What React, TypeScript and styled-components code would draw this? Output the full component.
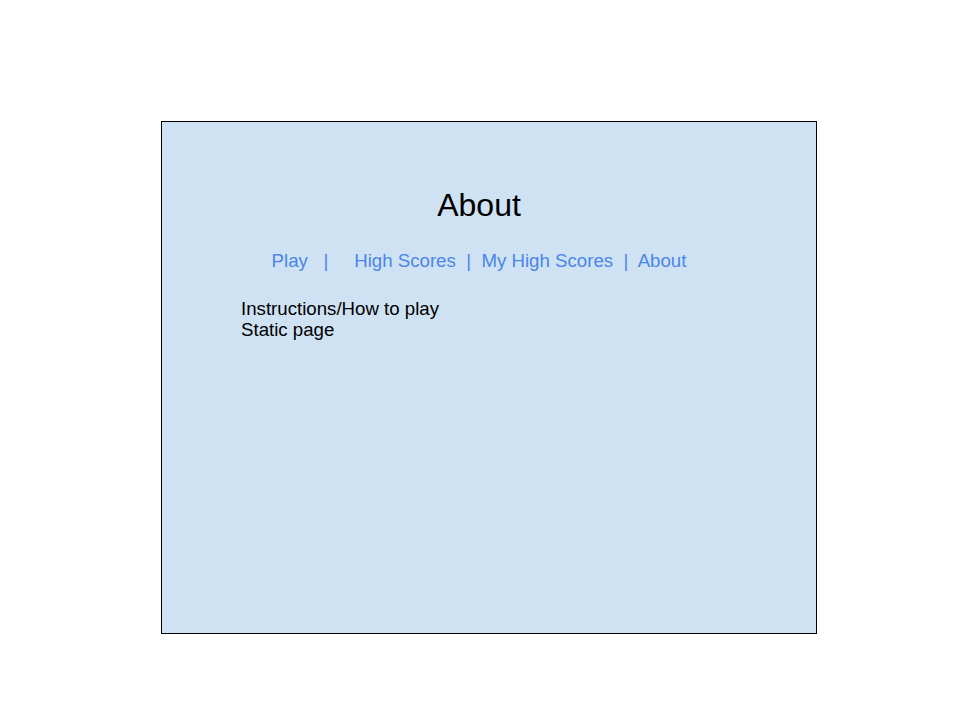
import React from "react";
import styled, { createGlobalStyle } from "styled-components";

const GlobalStyle = createGlobalStyle`
  html, body {
    margin: 0;
    padding: 0;
    background: #ffffff;
  }
  body {
    font-family: "Liberation Sans", Arial, sans-serif;
  }
`;

const Page = styled.div`
  width: 960px;
  height: 720px;
  padding-top: 121px;
  padding-left: 161px;
  box-sizing: border-box;
`;

const Frame = styled.div`
  width: 656px;
  height: 513px;
  box-sizing: border-box;
  border: 1px solid #000000;
  background: #cfe2f3;
  padding-top: 65px;
`;

const Header = styled.div`
  padding-right: 20px;
  text-align: center;
`;

const Title = styled.h1`
  margin: 0;
  font-size: 32px;
  line-height: 37px;
  font-weight: normal;
  color: #000000;
`;

const Nav = styled.nav`
  margin-top: 26px;
  font-size: 18.67px;
  line-height: 22px;
  white-space: pre;
  color: #4a86e8;
`;

const NavLink = styled.a`
  color: #4a86e8;
  text-decoration: none;
  cursor: pointer;
`;

const Sep = styled.span`
  color: #4a86e8;
`;

const Body = styled.div`
  margin-top: 26px;
  padding-left: 79px;
  font-size: 18.67px;
  line-height: 21.3px;
  color: #000000;
`;

const Line = styled.div``;

const links = ["Play", "High Scores", "My High Scores", "About"];
const seps = ["   |     ", "  |  ", "  |  "];

export default function App() {
  return (
    <>
      <GlobalStyle />
      <Page>
        <Frame>
          <Header>
            <Title>About</Title>
            <Nav>
              {links.map((l, i) => (
                <React.Fragment key={l}>
                  <NavLink>{l}</NavLink>
                  {i < seps.length && <Sep>{seps[i]}</Sep>}
                </React.Fragment>
              ))}
            </Nav>
          </Header>
          <Body>
            <Line>Instructions/How to play</Line>
            <Line>Static page</Line>
          </Body>
        </Frame>
      </Page>
    </>
  );
}
